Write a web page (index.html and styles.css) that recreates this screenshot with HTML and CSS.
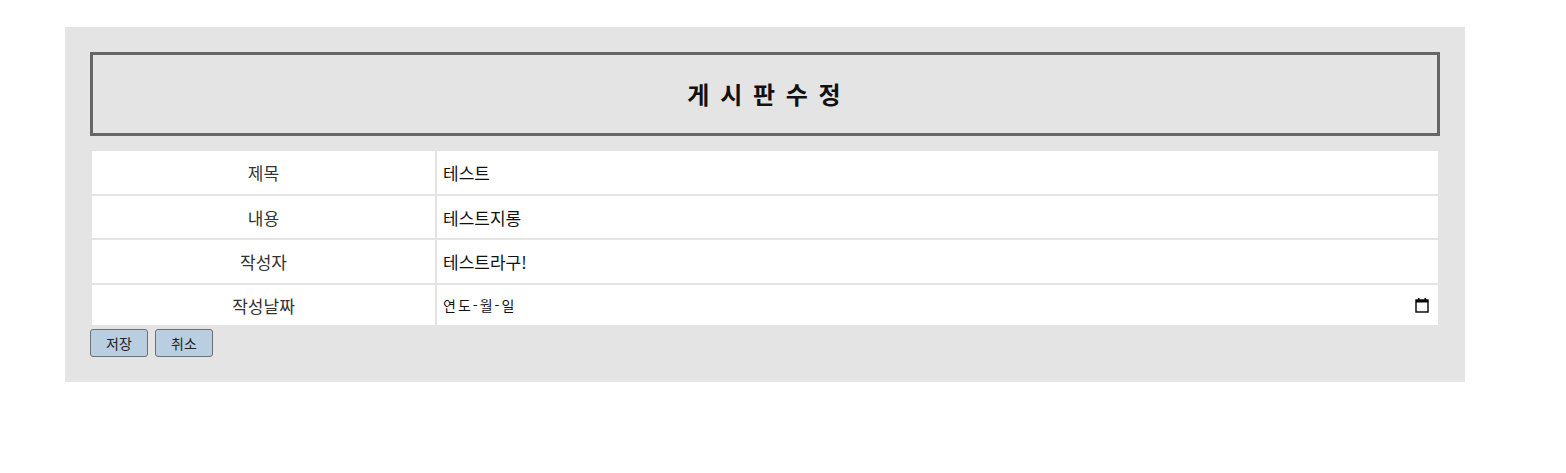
FILE: index.html
```html
<!DOCTYPE html>
<html lang="ko">
<head>
<meta charset="utf-8">
<title>게시판 수정</title>
<link rel="stylesheet" href="styles.css">
</head>
<body>
<div class="board">
  <h2 class="board-title">게 시 판 수 정</h2>
  <table class="form-table">
    <tr class="row">
      <th class="label">제목</th>
      <td class="field"><input class="text-input" type="text" value="테스트"></td>
    </tr>
    <tr class="row row-2">
      <th class="label">내용</th>
      <td class="field"><input class="text-input" type="text" value="테스트지롱"></td>
    </tr>
    <tr class="row">
      <th class="label">작성자</th>
      <td class="field"><input class="text-input" type="text" value="테스트라구!"></td>
    </tr>
    <tr class="row row-date">
      <th class="label">작성날짜</th>
      <td class="field">
        <div class="date-input">
          <span class="date-text">연도-월-일</span>
          <svg class="cal-icon" width="14" height="16" viewBox="0 0 14 16">
            <rect x="1" y="3" width="12" height="12" fill="none" stroke="#000" stroke-width="1.4"/>
            <rect x="1" y="3" width="12" height="2.5" fill="#000"/>
            <rect x="3" y="1" width="1.5" height="3" fill="#000"/>
            <rect x="9.5" y="1" width="1.5" height="3" fill="#000"/>
          </svg>
        </div>
      </td>
    </tr>
  </table>
  <div class="actions">
    <button class="btn" type="button">저장</button>
    <button class="btn" type="button">취소</button>
  </div>
</div>
</body>
</html>
```

FILE: styles.css
```css
body {
  margin: 8px;
  background: #ffffff;
  font-family: "Noto Sans CJK KR", "Noto Sans", sans-serif;
}

.board {
  width: 1400px;
  box-sizing: border-box;
  margin: 19px 0 0 57px;
  padding: 25px 25px 25px 25px;
  background: #e4e4e4;
}

.board-title {
  margin: 0 0 13px 0;
  height: 84px;
  box-sizing: border-box;
  border: 3px solid #666666;
  display: flex;
  align-items: center;
  justify-content: center;
  font-size: 24px;
  font-weight: bold;
  letter-spacing: 2px;
  color: #111;
  padding-bottom: 2px;
}

.form-table {
  width: 1350px;
  border-collapse: separate;
  border-spacing: 2px;
  margin: 0;
}

.row {
  height: 43px;
}

.row-2 {
  height: 42px;
}

.row-date {
  height: 40px;
}

.label {
  width: 343px;
  background: #ffffff;
  font-weight: normal;
  font-size: 17px;
  color: #333333;
  text-align: center;
  padding: 0;
}

.field {
  background: #ffffff;
  padding: 0;
}

.text-input {
  width: 100%;
  box-sizing: border-box;
  border: none;
  outline: none;
  background: transparent;
  padding: 0 6px;
  font-family: "Noto Sans CJK KR", "Noto Sans", sans-serif;
  font-size: 17px;
  color: #111;
}

.date-input {
  display: flex;
  align-items: center;
  justify-content: space-between;
  padding: 0 9px 0 6px;
}

.date-text {
  font-size: 14px;
  letter-spacing: 2px;
  color: #111;
}

.cal-icon {
  display: block;
}

.actions {
  display: flex;
  gap: 7px;
  margin-top: 2px;
}

.btn {
  width: 58px;
  height: 28px;
  box-sizing: border-box;
  background: #b9cfe1;
  border: 1px solid #707070;
  border-radius: 3px;
  padding: 0;
  font-family: "Noto Sans CJK KR", "Noto Sans", sans-serif;
  font-size: 14px;
  color: #222;
}
```
